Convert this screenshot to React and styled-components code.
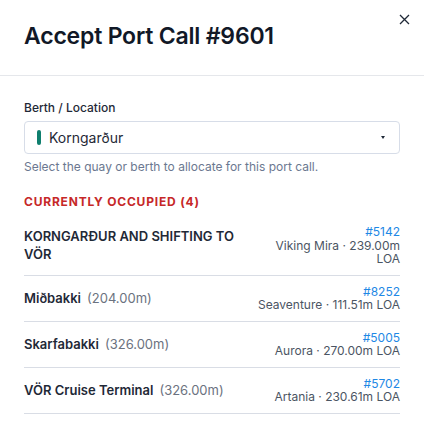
import styled, { createGlobalStyle } from "styled-components";

const GlobalStyle = createGlobalStyle`
  body {
    margin: 0;
    background: #ffffff;
    font-family: Inter, "Noto Sans", sans-serif;
    color: #111827;
  }
`;

const Dialog = styled.div`
  width: 424px;
  height: 433px;
  background: #ffffff;
  position: relative;
  overflow: hidden;
`;

const Header = styled.div`
  padding: 22px 24px 25px;
  border-bottom: 1px solid #e5e7eb;
`;

const Title = styled.h2`
  margin: 0;
  font-size: 23px;
  line-height: 28px;
  font-weight: 600;
  color: #111827;
  letter-spacing: -0.2px;
`;

const CloseButton = styled.button`
  position: absolute;
  top: 11px;
  right: 12px;
  width: 16px;
  height: 16px;
  padding: 0;
  border: none;
  background: transparent;
  display: flex;
  align-items: center;
  justify-content: center;
  color: #1f2937;
`;

const Body = styled.div`
  padding: 24px 24px 0;
  display: flex;
  flex-direction: column;
`;

const Label = styled.label`
  font-size: 12px;
  line-height: 16px;
  font-weight: 500;
  color: #1f2937;
  margin-bottom: 5px;
`;

const Select = styled.div`
  height: 33px;
  box-sizing: border-box;
  border: 1px solid #d7dde8;
  border-radius: 4px;
  display: flex;
  align-items: center;
  padding: 0 14px 0 12px;
  gap: 8px;
  font-size: 14px;
  color: #1f2937;
`;

const Swatch = styled.span`
  width: 4px;
  height: 15px;
  border-radius: 2px;
  background: ${({ $color }) => $color};
`;

const SelectText = styled.span`
  flex: 1;
`;

const Caret = styled.span`
  width: 0;
  height: 0;
  border-left: 2px solid transparent;
  border-right: 2px solid transparent;
  border-top: 3px solid #1f2937;
`;

const Help = styled.div`
  margin-top: 5px;
  font-size: 12px;
  line-height: 16px;
  color: #6b7890;
`;

const SectionTitle = styled.div`
  margin-top: 19px;
  font-size: 12px;
  line-height: 16px;
  font-weight: 700;
  letter-spacing: 0.8px;
  color: #c62828;
`;

const List = styled.div`
  margin-top: 6px;
  display: flex;
  flex-direction: column;
`;

const Row = styled.div`
  display: flex;
  justify-content: space-between;
  align-items: center;
  gap: 14px;
  padding: 9px 0;
  border-bottom: 1px solid #d9dde5;
`;

const BerthName = styled.div`
  flex: 1;
  min-width: 0;
  font-size: 13px;
  line-height: 18px;
  font-weight: 600;
  color: #1f2937;
  text-transform: ${({ $upper }) => ($upper ? "uppercase" : "none")};
`;

const Length = styled.span`
  font-weight: 400;
  color: #6b7280;
  margin-left: 6px;
`;

const Vessel = styled.div`
  flex-shrink: 0;
  max-width: 146px;
  text-align: right;
  font-size: 12px;
  line-height: 13.5px;
  color: #4b5563;
`;

const CallLink = styled.a`
  display: block;
  color: #1e88e5;
  text-decoration: none;
`;

const occupied = [
  { berth: "Korngarður and shifting to VÖR", upper: true, id: "5142", ship: "Viking Mira", loa: "239.00m" },
  { berth: "Miðbakki", length: "204.00m", id: "8252", ship: "Seaventure", loa: "111.51m" },
  { berth: "Skarfabakki", length: "326.00m", id: "5005", ship: "Aurora", loa: "270.00m" },
  { berth: "VÖR Cruise Terminal", length: "326.00m", id: "5702", ship: "Artania", loa: "230.61m" },
];

export default function App() {
  return (
    <>
      <GlobalStyle />
      <Dialog>
        <CloseButton aria-label="Close">
          <svg width="11" height="11" viewBox="0 0 11 11">
            <path d="M1 1L10 10M10 1L1 10" stroke="currentColor" strokeWidth="1.3" />
          </svg>
        </CloseButton>
        <Header>
          <Title>Accept Port Call #9601</Title>
        </Header>
        <Body>
          <Label>Berth / Location</Label>
          <Select>
            <Swatch $color="#0f7f6e" />
            <SelectText>Korngarður</SelectText>
            <Caret />
          </Select>
          <Help>Select the quay or berth to allocate for this port call.</Help>
          <SectionTitle>CURRENTLY OCCUPIED ({occupied.length})</SectionTitle>
          <List>
            {occupied.map((o) => (
              <Row key={o.id}>
                <BerthName $upper={o.upper}>
                  {o.berth}
                  {o.length && <Length>({o.length})</Length>}
                </BerthName>
                <Vessel>
                  <CallLink href="#">#{o.id}</CallLink>
                  {o.ship} · {o.loa} LOA
                </Vessel>
              </Row>
            ))}
          </List>
        </Body>
      </Dialog>
    </>
  );
}
